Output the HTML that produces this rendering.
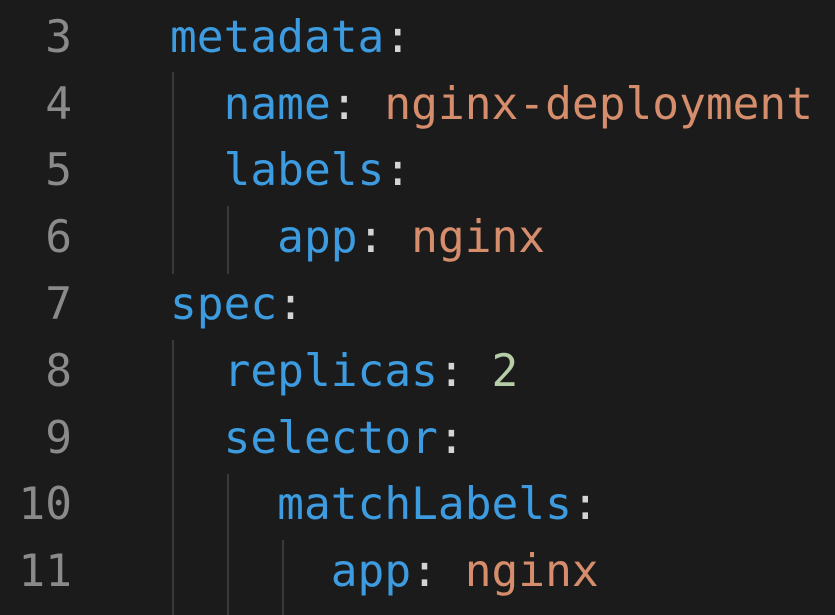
<!DOCTYPE html>
<html><head><meta charset="utf-8"><style>
html,body{margin:0;padding:0;background:#1b1b1b;width:835px;height:615px;overflow:hidden}
.l{position:absolute;left:0;height:67px;line-height:67px;font-family:"DejaVu Sans Mono","Liberation Mono",monospace;font-size:44.5px;white-space:pre;color:#d4d4d4}
.n{position:absolute;width:72px;text-align:right;color:#8a8a8a;left:0}
.c{position:absolute;left:170px}
.k{color:#3d9be0}.s{color:#d58d6c}.d{color:#b5cea8}.p{color:#d4d4d4}
.g{position:absolute;width:2px;background:#3a3a3a}
</style></head><body>
<div class="g" style="left:172px;top:72px;height:202px"></div>
<div class="g" style="left:227px;top:206px;height:68px"></div>
<div class="g" style="left:172px;top:340px;height:275px"></div>
<div class="g" style="left:227px;top:474px;height:141px"></div>
<div class="g" style="left:282px;top:540px;height:75px"></div>
<div class="l" style="top:4px"><span class="n">3</span><span class="c"><span class="k">metadata</span>:</span></div>
<div class="l" style="top:71px"><span class="n">4</span><span class="c">  <span class="k">name</span>: <span class="s">nginx-deployment</span></span></div>
<div class="l" style="top:137px"><span class="n">5</span><span class="c">  <span class="k">labels</span>:</span></div>
<div class="l" style="top:204px"><span class="n">6</span><span class="c">    <span class="k">app</span>: <span class="s">nginx</span></span></div>
<div class="l" style="top:271px"><span class="n">7</span><span class="c"><span class="k">spec</span>:</span></div>
<div class="l" style="top:338px"><span class="n">8</span><span class="c">  <span class="k">replicas</span>: <span class="d">2</span></span></div>
<div class="l" style="top:405px"><span class="n">9</span><span class="c">  <span class="k">selector</span>:</span></div>
<div class="l" style="top:471px"><span class="n">10</span><span class="c">    <span class="k">matchLabels</span>:</span></div>
<div class="l" style="top:538px"><span class="n">11</span><span class="c">      <span class="k">app</span>: <span class="s">nginx</span></span></div>
</body></html>
